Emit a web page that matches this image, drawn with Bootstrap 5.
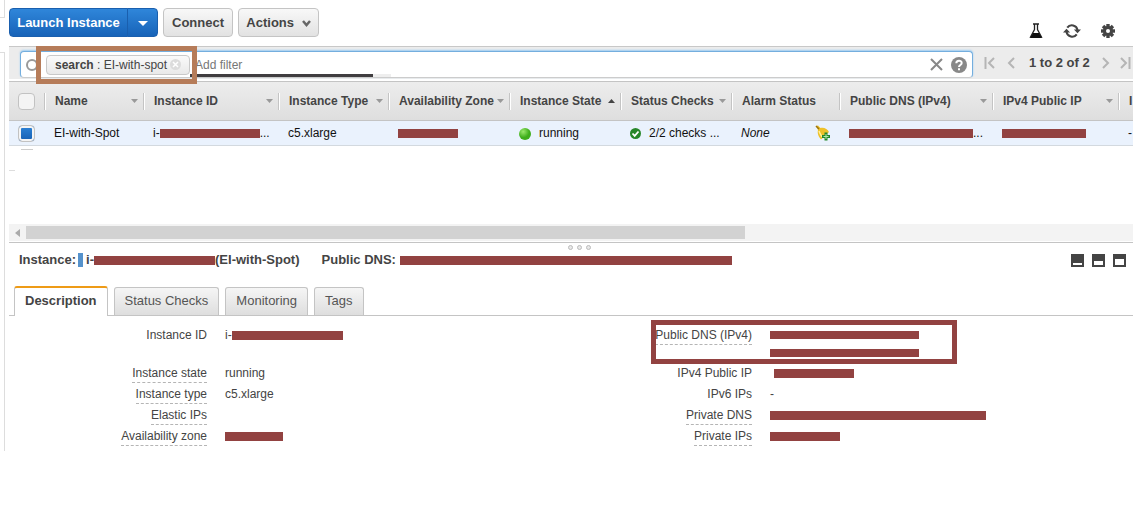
<!DOCTYPE html>
<html lang="en">
<head>
<meta charset="utf-8">
<meta name="viewport" content="width=device-width, initial-scale=1">
<title>EC2 Instances</title>
<link href="https://cdn.jsdelivr.net/npm/bootstrap@5.3.0/dist/css/bootstrap.min.css" rel="stylesheet">
<style>
body{font:12px/20px "Liberation Sans",Arial,sans-serif;color:#444;background:#fff;overflow-x:hidden}
button{font-family:inherit;color:inherit}
.shell{min-width:0}
.rail{width:5px;flex:none}
.rail-top{height:18px;border:solid #ddd;border-width:0 1px 1px 0}
.rail-side{height:399px;margin-top:34px;border:solid #ddd;border-width:1px 1px 0 0}
.content{margin-left:4px;min-width:0}
.actions{height:46px;padding-top:8px;gap:5px}
.btn.act{height:29px;padding:0 8px;font-size:13px;line-height:27px;font-weight:700;border-radius:4px;color:#444;border:1px solid #c4c4c4;background:linear-gradient(#f8f8f8,#e2e2e2)}
.btn.launch{color:#fff;border-color:#1a5fae;background:linear-gradient(#2f86da,#1763b8)}
.launch-group .btn:first-child{width:119px;border-radius:4px 0 0 4px;padding:0}
.launch-group .btn:last-child{width:31px;border-radius:0 4px 4px 0;padding:0}
.btn.connect{width:70px;padding:0}
.btn.menu{width:81px;padding:0}
.tool{border:0;background:none;padding:0;width:18px;height:18px;display:flex;align-items:center;justify-content:center}
.tools{gap:18px;padding:14px 16px 0 0}
.filterbar{height:33px;border-top:1px solid #c8c8c8;background:#ececec;padding-left:11px}
.searchbox{height:27px;margin-top:4px;border:solid #74aede;border-width:1px 1px 0;border-bottom:1px solid #ccc;border-radius:4px;background:#fff;box-shadow:0 -1px 2px #9cccf2;padding:0 5px;min-width:0}
.mag{flex:none;width:20px}
.chip{height:20px;line-height:18px;border:1px solid #c9c9c9;border-radius:4px;background:linear-gradient(#fafafa,#e9e9e9);padding:0 8px;white-space:nowrap;width:144px}
.chip-wrap{position:relative}
.chip-mark{position:absolute;left:-10px;top:-9px;width:161px;height:38px;border:5px solid #b67c59;z-index:3;pointer-events:none}
.searchbox input{border:0;outline:0;background:none;padding:0 0 0 5px;height:24px;color:#444;min-width:0}
.searchbox input::placeholder{color:#777;opacity:1}
.field-wrap{position:relative;min-width:0}
.progress-strip{position:absolute;left:0;bottom:0;width:183px;height:3px;background:#403d40;z-index:2}
.progress-strip::after{content:"";position:absolute;left:183px;width:18px;height:3px;background:#eee}
.pager{width:160px;padding-left:10px;font-size:13px;font-weight:700;flex:none;overflow:hidden;white-space:nowrap}
.pager button{border:0;background:none;padding:0;width:13px;height:20px;line-height:0;flex:none}
.grid-wrap{height:143px;margin-top:2px;border-top:1px solid #c4c4c4;overflow:hidden;position:relative}
.inst{table-layout:fixed;width:1260px;border-collapse:separate;border-spacing:0}
.inst th{height:39px;background:linear-gradient(#ededed,#dedede);border-bottom:1px solid #c4c4c4;padding:0 5px 0 0;white-space:nowrap}
.inst th>div{border-left:1px solid #c4c4c4;box-shadow:inset 1px 0 #fff;height:17px;padding-left:10px;line-height:17px;display:flex;align-items:center;justify-content:space-between}
.inst th:first-child>div{border:0;box-shadow:none}
.inst td{height:25px;background:#eaf2fd;border-bottom:1px solid #d3d9df;padding:0 0 0 10px;white-space:nowrap;color:#111;line-height:24px}
.inst th:first-child,.inst td:first-child{padding:0 0 0 9px}
.inst th:first-child>div{padding:0}
.pick{appearance:none;display:block;margin:0;width:17px;height:17px;border:1px solid #c2c2c2;border-radius:4px;background:#f4f4f4}
.pick:checked{background:linear-gradient(#2d83d8,#165fb2);box-shadow:inset 0 0 0 2px #f4f4f4}
.tri{flex:none;width:7px;height:4px;background:#999;clip-path:polygon(0 0,100% 0,50% 100%)}
.tri-up{background:#444;clip-path:polygon(50% 0,100% 100%,0 100%)}
.stub-a{width:12px;height:1px;background:#ccc;margin:3px 0 0 12px}
.stub-b{width:6px;height:1px;background:#ddd;margin-top:20px}
.hscroll{height:17px;background:#f3f3f3;padding:2px 0}
.hscroll-arrow{width:17px;border:0;background:none;padding:0;line-height:0}
.hscroll-thumb{width:64%;background:#d2d2d2}
.splitter{height:10px;margin-top:1px;border-top:1px solid #c4c4c4;gap:4px;padding:2px 0 0 16px}
.splitter i{width:5px;height:5px;border:1px solid #bbb;border-radius:50%;background:#e8e8e8}
.summary{height:14px;line-height:14px;font-size:13px;font-weight:700;margin:1px 7px 0 10px;white-space:nowrap}
.cut{display:inline-block;background:#924241;height:9px;vertical-align:middle;flex:none}
.w-58{width:58px}.w-67{width:70px}.w-60{width:60px}.w-84{width:84px}.w-80{width:80px}.w-100p{width:100px}.w-111{width:111px}.w-121{width:121px}.w-124{width:124px}.w-149{width:149px}.w-216{width:216px}.w-332{width:332px}
.sel{width:5px;height:14px;background:#5592cc;margin:0 3px 0 2px}
.dns-title{margin-left:22px}
.tabset{margin-top:19px;padding-left:5px;gap:6px;border-bottom:1px solid #c4c4c4}
.tabset .nav-link{height:28px;margin:1px 0 0;padding:0 10px;font-size:13px;line-height:26px;color:#555;border:1px solid #c4c4c4;border-bottom:0;border-radius:3px 3px 0 0;background:linear-gradient(#f5f5f5,#dedede)}
.tabset .nav-link.active{height:30px;margin:0 0 -1px;color:#444;font-weight:700;background:#fff;border-top:2px solid #ee9b17}
.facts{margin:0;padding-top:9px}
.facts>div{display:flex;height:21px;position:relative}
.facts>div:first-child{height:38px}
.facts dt{font-weight:400;text-align:right;width:198px;flex:none;margin-right:18px}
.facts-right dt{width:181px}
.facts dt span{display:inline-block;line-height:20px;height:20px;vertical-align:top}
.facts dt .hint{border-bottom:1px dashed #b5b5b5}
.facts dd{margin:0;line-height:20px}
.dns-mark{position:absolute;left:80px;top:-5px;width:306px;height:44px;border:5px solid #924241}
.two .cut{display:block;height:8px;margin:6px 0 10px}
</style>
</head>
<body>
<div class="shell d-flex">
  <div class="rail"><div class="rail-top"></div><div class="rail-side"></div></div>
  <main class="content flex-grow-1">
    <div class="actions d-flex">
      <div class="launch-group btn-group align-self-start">
        <button class="btn act launch" type="button">Launch Instance</button>
        <button class="btn act launch" type="button" aria-label="More launch options"><svg width="10" height="5"><path d="M0 0h10L5 5z" fill="#fff"/></svg></button>
      </div>
      <button class="btn act connect align-self-start" type="button">Connect</button>
      <button class="btn act menu align-self-start" type="button">Actions <svg class="ms-1" width="9" height="7" viewBox="0 0 9 7"><path d="M1 1l3.500 4L8 1" fill="none" stroke="#666" stroke-width="2.500"/></svg></button>
      <div class="tools d-flex ms-auto">
        <button class="tool" type="button" aria-label="Experiments"><svg width="14" height="16" viewBox="0 0 14 16"><path d="M4 1h6M5.500 1v5.500L1.500 14h11L8.500 6.500V1" fill="none" stroke="#222" stroke-width="1.300"/><path d="M4 10h6l3 5H1z" fill="#111"/></svg></button>
        <button class="tool" type="button" aria-label="Refresh"><svg width="19" height="16" viewBox="0 0 19 16"><path d="M4.500 4.500A6 6 0 0 1 15.300 7M14.500 11.500A6 6 0 0 1 3.700 9" fill="none" stroke="#444" stroke-width="2.200"/><path d="M11.500 6.500h7.500L15.300 10.500zM0 9.500h7.500L3.700 5.500z" fill="#444"/></svg></button>
        <button class="tool" type="button" aria-label="Settings"><svg width="14" height="14" viewBox="-7 -7 14 14"><g fill="#444"><path d="M-1.700-7h3.400v14h-3.400z"/><path d="M-1.700-7h3.400v14h-3.400z" transform="rotate(45)"/><path d="M-1.700-7h3.400v14h-3.400z" transform="rotate(90)"/><path d="M-1.700-7h3.400v14h-3.400z" transform="rotate(135)"/><circle r="5"/></g><circle r="2" fill="#fff"/></svg></button>
      </div>
    </div>

    <div class="filterbar d-flex">
      <div class="searchbox d-flex align-items-center flex-grow-1">
        <svg class="mag" height="16" viewBox="0 0 20 16"><circle cx="6" cy="8" r="5" fill="none" stroke="#999" stroke-width="2"/><path d="M10 12l4 3" stroke="#999" stroke-width="2"/></svg>
        <div class="chip-wrap">
          <div class="chip d-flex align-items-center justify-content-between"><span><b>search</b> : EI-with-spot</span><svg width="11" height="11" viewBox="0 0 11 11"><circle cx="5.500" cy="5.500" r="5.500" fill="#dcdcdc"/><path d="M3 3l5 5M8 3L3 8" stroke="#fff" stroke-width="1.500"/></svg></div>
          <div class="chip-mark"></div>
        </div>
        <div class="field-wrap flex-grow-1"><input class="w-100" type="text" placeholder="Add filter" aria-label="Add filter"><div class="progress-strip"></div></div>
        <svg width="13" height="13" viewBox="0 0 13 13"><path d="M1 1l11 11M12 1L1 12" stroke="#888" stroke-width="2"/></svg>
        <svg class="ms-2" width="16" height="16" viewBox="0 0 16 16"><circle cx="8" cy="8" r="8" fill="#888"/><path d="M5.300 6.300C5.300 2.800 10.700 2.900 10.700 6c0 2-2.700 1.900-2.700 4" fill="none" stroke="#fff" stroke-width="2"/><path d="M7 11.200h2v2H7z" fill="#fff"/></svg>
      </div>
      <nav class="pager d-flex align-items-center" aria-label="Pages">
        <button type="button" aria-label="First"><svg width="11" height="12"><path d="M1.500 0v12M10 1L5 6l5 5" fill="none" stroke="#b5b5b5" stroke-width="2"/></svg></button>
        <button class="ms-2" type="button" aria-label="Previous"><svg width="8" height="12"><path d="M7 1L2 6l5 5" fill="none" stroke="#b5b5b5" stroke-width="2"/></svg></button>
        <span class="ms-2 ps-1">1 to 2 of 2</span>
        <button class="ms-2 ps-1" type="button" aria-label="Next"><svg width="8" height="12"><path d="M1 1l5 5-5 5" fill="none" stroke="#b5b5b5" stroke-width="2"/></svg></button>
        <button class="ms-2" type="button" aria-label="Last"><svg width="11" height="12"><path d="M9.500 0v12M1 1l5 5-5 5" fill="none" stroke="#b5b5b5" stroke-width="2"/></svg></button>
      </nav>
    </div>

    <div class="grid-wrap">
      <table class="inst">
        <colgroup><col style="width:35px"><col style="width:99px"><col style="width:135px"><col style="width:110px"><col style="width:121px"><col style="width:111px"><col style="width:111px"><col style="width:108px"><col style="width:153px"><col style="width:126px"><col></colgroup>
        <thead><tr>
          <th><div><input class="pick" type="checkbox" aria-label="Select all"></div></th>
          <th><div>Name<i class="tri"></i></div></th>
          <th><div>Instance ID<i class="tri"></i></div></th>
          <th><div>Instance Type<i class="tri"></i></div></th>
          <th><div>Availability Zone<i class="tri"></i></div></th>
          <th><div>Instance State<i class="tri tri-up"></i></div></th>
          <th><div>Status Checks<i class="tri"></i></div></th>
          <th><div>Alarm Status</div></th>
          <th><div>Public DNS (IPv4)<i class="tri"></i></div></th>
          <th><div>IPv4 Public IP<i class="tri"></i></div></th>
          <th><div>I</div></th>
        </tr></thead>
        <tbody><tr>
          <td><input class="pick" type="checkbox" checked aria-label="Select EI-with-Spot"></td>
          <td>EI-with-Spot</td>
          <td>i-<span class="cut w-100p"></span>...</td>
          <td>c5.xlarge</td>
          <td><span class="cut w-60"></span></td>
          <td><svg width="12" height="12"><defs><radialGradient id="g" cx=".35" cy=".3"><stop stop-color="#9ae86b"/><stop offset="1" stop-color="#3fae1c"/></radialGradient></defs><circle cx="6" cy="6" r="6" fill="url(#g)"/></svg><span class="ms-2">running</span></td>
          <td><svg width="11" height="11"><circle cx="5.500" cy="5.500" r="5.500" fill="#27862a"/><path d="M2.500 5.500l2.200 2.300L8.500 3.500" fill="none" stroke="#fff" stroke-width="1.800"/></svg><span class="ms-2">2/2 checks ...</span></td>
          <td><div class="d-flex align-items-center justify-content-between pe-2"><i>None</i><svg width="16" height="16" viewBox="0 0 16 16"><path d="M1 1l2-.5L5.500 3C9 2 12.500 4 14 7l-8 7.500C4 12 2 9 3 5z" fill="#efc129"/><path d="M1 1l3 3" stroke="#9a7411" stroke-width="1.500"/><path d="M4 6c1 3 2 4 3 6" stroke="#fff09a" stroke-width="1.500" fill="none"/><path d="M9.500 7.500h3v2.500H15v3h-2.500v2.500h-3V13H7v-3h2.500z" fill="#23862b"/><path d="M11 9v5M8.500 11.500h5" stroke="#b7e8a6"/></svg></div></td>
          <td><span class="cut w-124"></span>...</td>
          <td><span class="cut w-84"></span></td>
          <td>-</td>
        </tr></tbody>
      </table>
      <div class="stub-a"></div><div class="stub-b"></div>
    </div>
    <div class="hscroll d-flex">
      <button class="hscroll-arrow" type="button" aria-label="Scroll left"><svg width="5" height="8"><path d="M5 0v8L0 4z" fill="#aaa"/></svg></button>
      <div class="hscroll-thumb"></div>
    </div>

    <div class="splitter d-flex justify-content-center"><i></i><i></i><i></i></div>
    <div class="summary d-flex align-items-center">
      <span>Instance:</span><span class="sel"></span><span>i-</span><span class="cut w-121"></span><span>(EI-with-Spot)</span>
      <span class="dns-title">Public DNS:</span><span class="cut w-332 ms-1"></span>
      <div class="d-flex ms-auto gap-2">
        <svg width="13" height="13"><path d="M0 0h13v13H0z" fill="#444"/><path d="M2 9h9v2H2z" fill="#fff"/></svg>
        <svg width="13" height="13"><path d="M0 0h13v13H0z" fill="#444"/><path d="M2 7h9v4H2z" fill="#fff"/></svg>
        <svg width="13" height="13"><path d="M0 0h13v13H0z" fill="#444"/><path d="M2 5h9v6H2z" fill="#fff"/></svg>
      </div>
    </div>

    <nav class="tabset nav align-items-end">
      <a class="nav-link active" href="#description">Description</a>
      <a class="nav-link" href="#checks">Status Checks</a>
      <a class="nav-link" href="#monitoring">Monitoring</a>
      <a class="nav-link" href="#tags">Tags</a>
    </nav>
    <div class="row g-0" id="description">
      <dl class="facts col-6">
        <div><dt><span>Instance ID</span></dt><dd>i-<span class="cut w-111"></span></dd></div>
        <div><dt><span class="hint">Instance state</span></dt><dd>running</dd></div>
        <div><dt><span class="hint">Instance type</span></dt><dd>c5.xlarge</dd></div>
        <div><dt><span class="hint">Elastic IPs</span></dt><dd></dd></div>
        <div><dt><span class="hint">Availability zone</span></dt><dd><span class="cut w-58"></span></dd></div>
      </dl>
      <dl class="facts facts-right col-6">
        <div><dt><span class="hint">Public DNS (IPv4)</span></dt><dd class="two"><span class="cut w-149"></span><span class="cut w-149"></span></dd><div class="dns-mark"></div></div>
        <div><dt><span>IPv4 Public IP</span></dt><dd><span class="cut w-80 ms-1"></span></dd></div>
        <div><dt><span>IPv6 IPs</span></dt><dd>-</dd></div>
        <div><dt><span class="hint">Private DNS</span></dt><dd><span class="cut w-216"></span></dd></div>
        <div><dt><span class="hint">Private IPs</span></dt><dd><span class="cut w-67"></span></dd></div>
      </dl>
    </div>
  </main>
</div>
<script src="https://cdn.jsdelivr.net/npm/bootstrap@5.3.0/dist/js/bootstrap.bundle.min.js"></script>
</body>
</html>
